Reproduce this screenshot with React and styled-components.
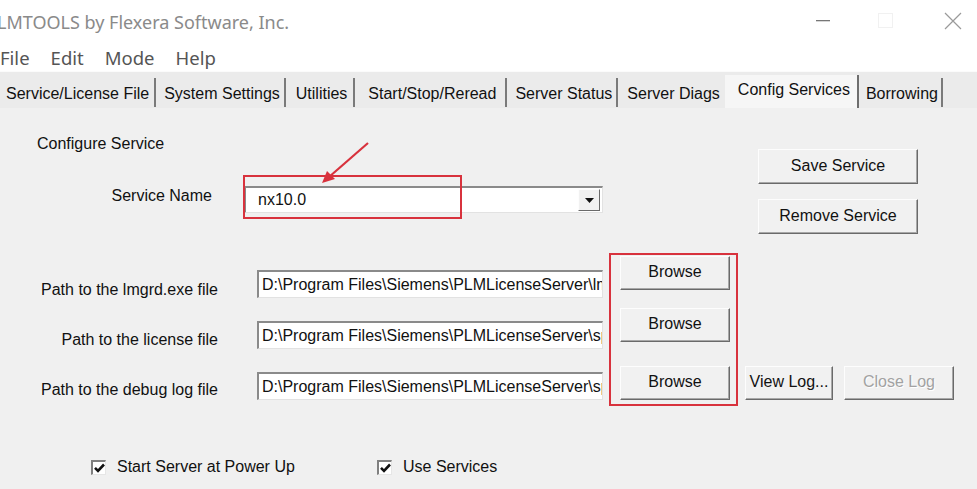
import React from 'react';
import styled, { createGlobalStyle } from 'styled-components';

const GlobalStyle = createGlobalStyle`
  html, body {
    margin: 0;
    padding: 0;
    background: #f0f0f0;
  }
  body {
    width: 977px;
    height: 489px;
    overflow: hidden;
    font-family: "Liberation Sans", Arial, sans-serif;
    color: #111;
  }
`;

const Window = styled.div`
  position: relative;
  width: 977px;
  height: 489px;
  overflow: hidden;
  background: #f0f0f0;
`;

const TitleBar = styled.div`
  height: 45px;
  display: flex;
  align-items: center;
  background: #fff;
`;
const TitleText = styled.div`
  margin-left: -3px;
  margin-top: -2px;
  font-family: "Noto Sans", "Open Sans", sans-serif;
  font-size: 18px;
  color: #8a8a8a;
  flex: 1;
  white-space: nowrap;
`;
const Controls = styled.div`
  display: flex;
  align-items: center;
  margin-top: -4px;
  svg {
    display: block;
  }
`;
const ControlBox = styled.div`
  width: ${(p) => p.$w}px;
  display: flex;
  justify-content: center;
`;

const MenuBar = styled.div`
  height: 26px;
  display: flex;
  align-items: center;
  gap: 21px;
  background: #fff;
  font-family: "Noto Sans", "Open Sans", sans-serif;
  font-size: 18.5px;
  color: #555;
  padding-bottom: 2px;
  box-sizing: border-box;
`;

const TabStrip = styled.div`
  height: 37px;
  display: flex;
  align-items: flex-end;
  background: #ebebeb;
  border-top: 1px solid #fbfbfb;
  box-sizing: border-box;
`;
const Tab = styled.div`
  display: flex;
  align-items: center;
  height: 26px;
  margin-bottom: 1px;
  padding: 3px ${(p) => 5 + (p.$extra || 0)}px 0 ${(p) => (p.$first ? 6 : 9) + (p.$extra || 0)}px;
  font-size: 16px;
  border-right: ${(p) => (p.$noSep ? 'none' : '2px solid #7a7a7a')};
  white-space: nowrap;
`;
const ActiveTab = styled.div`
  display: flex;
  align-items: center;
  align-self: stretch;
  padding: 0 7px 4px 13px;
  margin-top: 3px;
  font-size: 16px;
  background: #f6f6f6;
  border-right: 2px solid #6e6e6e;
  white-space: nowrap;
`;

const Body = styled.div`
  display: flex;
  flex-direction: column;
`;

const TopArea = styled.div`
  display: grid;
  grid-template-columns: 758px 160px;
  height: 148px;
`;
const LeftCol = styled.div`
  display: flex;
  flex-direction: column;
`;
const Heading = styled.div`
  margin: 26px 0 0 37px;
  line-height: 20px;
  font-size: 16px;
`;
const ServiceRow = styled.div`
  display: flex;
  align-items: flex-start;
  margin-top: 32px;
`;
const ServiceLabel = styled.div`
  width: 212px;
  text-align: right;
  line-height: 20px;
  padding-top: ${(p) => p.$offset}px;
  font-size: 16px;
  flex-shrink: 0;
`;
const ButtonStack = styled.div`
  display: flex;
  flex-direction: column;
  gap: 15px;
  padding-top: 41px;
`;

const Button = styled.div`
  box-sizing: border-box;
  width: ${(p) => p.$w}px;
  height: ${(p) => p.$h || 35}px;
  display: flex;
  align-items: center;
  justify-content: center;
  padding-bottom: 2px;
  font-size: 16px;
  background: #f1f1f1;
  border: 1px solid;
  border-color: #fdfdfd #6a6a6a #6a6a6a #fdfdfd;
  box-shadow: inset -1px -1px 0 #a8a8a8;
  color: ${(p) => (p.$disabled ? '#a2a2a2' : '#111')};
  text-shadow: ${(p) => (p.$disabled ? '1px 1px 0 #fff' : 'none')};
  white-space: nowrap;
  flex-shrink: 0;
`;

const Combo = styled.div`
  box-sizing: border-box;
  width: 359px;
  height: 27px;
  margin-left: 32px;
  display: flex;
  align-items: center;
  background: #fff;
  border-top: 2px solid #8a8a8a;
  border-left: 2px solid #8a8a8a;
  border-right: 1px solid #e2e2e2;
  border-bottom: 1px solid #e2e2e2;
`;
const ComboText = styled.div`
  flex: 1;
  padding-left: 12px;
  font-size: 16px;
`;
const DropButton = styled.div`
  box-sizing: border-box;
  width: 22px;
  height: 22px;
  margin-right: 2px;
  display: flex;
  align-items: center;
  justify-content: center;
  background: #f1f1f1;
  border: 1px solid;
  border-color: #fdfdfd #6a6a6a #6a6a6a #fdfdfd;
`;

const PathRow = styled.div`
  display: flex;
  align-items: flex-start;
  height: ${(p) => p.$h}px;
`;
const PathLabel = styled.div`
  width: 218px;
  flex-shrink: 0;
  text-align: right;
  font-size: 16px;
  line-height: 20px;
  padding-top: ${(p) => p.$offset}px;
`;
const PathInput = styled.div`
  box-sizing: border-box;
  width: 346px;
  height: 28px;
  margin: ${(p) => p.$offset}px 17px 0 39px;
  padding-left: 3px;
  display: flex;
  align-items: center;
  overflow: hidden;
  white-space: nowrap;
  font-size: 16px;
  background: #fff;
  border-top: 2px solid #8a8a8a;
  border-left: 2px solid #8a8a8a;
  border-right: 1px solid #e2e2e2;
  border-bottom: 1px solid #e2e2e2;
`;
const Gap = styled.div`
  width: ${(p) => p.$w}px;
  flex-shrink: 0;
`;

const CheckRow = styled.div`
  display: flex;
  align-items: center;
  margin-top: 58px;
  padding-left: 91px;
`;
const CheckItem = styled.div`
  display: flex;
  align-items: center;
  gap: 11px;
  width: ${(p) => p.$w}px;
  font-size: 16px;
`;
const CheckBox = styled.div`
  box-sizing: border-box;
  width: 15px;
  height: 15px;
  background: #fff;
  border-top: 2px solid #808080;
  border-left: 2px solid #808080;
  border-right: 1px solid #e6e6e6;
  border-bottom: 1px solid #e6e6e6;
  display: flex;
  align-items: center;
  justify-content: center;
  svg {
    display: block;
  }
`;

const Highlight = styled.div`
  position: absolute;
  left: ${(p) => p.$x}px;
  top: ${(p) => p.$y}px;
  width: ${(p) => p.$w}px;
  height: ${(p) => p.$h}px;
  box-sizing: border-box;
  border: 2px solid #d8323d;
  pointer-events: none;
`;
const ArrowSvg = styled.svg`
  position: absolute;
  left: 310px;
  top: 135px;
  pointer-events: none;
`;

function Check() {
  return (
    <CheckBox>
      <svg width="11" height="10" viewBox="0 0 11 10">
        <path d="M1 4.8 L4 7.8 L10 1.5" fill="none" stroke="#111" strokeWidth="2.6" />
      </svg>
    </CheckBox>
  );
}

const paths = [
  {
    label: 'Path to the lmgrd.exe file',
    value: 'D:\\Program Files\\Siemens\\PLMLicenseServer\\lmgrd.exe',
    h: 52,
    labelOffset: 24,
    inputOffset: 14,
  },
  {
    label: 'Path to the license file',
    value: 'D:\\Program Files\\Siemens\\PLMLicenseServer\\splm10.lic',
    h: 58,
    labelOffset: 22,
    inputOffset: 13,
  },
  {
    label: 'Path to the debug log file',
    value: 'D:\\Program Files\\Siemens\\PLMLicenseServer\\splm_ugslmd.log',
    h: 34,
    labelOffset: 14,
    inputOffset: 6,
  },
];

const tabs = [
  { name: 'Service/License File', extra: 0 },
  { name: 'System Settings', extra: -1 },
  { name: 'Utilities', extra: 1 },
  { name: 'Start/Stop/Reread', extra: 4 },
  { name: 'Server Status', extra: -1 },
  { name: 'Server Diags', extra: 0 },
];

export default function App() {
  return (
    <Window>
      <GlobalStyle />
      <TitleBar>
        <TitleText>LMTOOLS by Flexera Software, Inc.</TitleText>
        <Controls>
          <ControlBox $w={36}>
            <svg width="14" height="2">
              <rect width="14" height="1.3" fill="#777" />
            </svg>
          </ControlBox>
          <ControlBox $w={88}>
            <svg width="15" height="15">
              <rect x="0.5" y="0.5" width="14" height="14" fill="none" stroke="#f1f1f1" />
            </svg>
          </ControlBox>
          <ControlBox $w={48}>
            <svg width="18" height="18">
              <path d="M1 1 L17 17 M17 1 L1 17" stroke="#9a9a9a" strokeWidth="1.2" />
            </svg>
          </ControlBox>
        </Controls>
      </TitleBar>

      <MenuBar>
        <span>File</span>
        <span>Edit</span>
        <span>Mode</span>
        <span>Help</span>
      </MenuBar>

      <TabStrip>
        {tabs.map((t, i) => (
          <Tab
            key={t.name}
            $first={i === 0}
            $extra={t.extra}
            $noSep={i === tabs.length - 1}
          >
            {t.name}
          </Tab>
        ))}
        <ActiveTab>Config Services</ActiveTab>
        <Tab $extra={-2}>Borrowing</Tab>
      </TabStrip>

      <Body>
        <TopArea>
          <LeftCol>
            <Heading>Configure Service</Heading>
            <ServiceRow>
              <ServiceLabel $offset={0}>Service Name</ServiceLabel>
              <Combo>
                <ComboText>nx10.0</ComboText>
                <DropButton>
                  <svg width="9" height="5">
                    <path d="M0 0 L9 0 L4.5 5 Z" fill="#111" />
                  </svg>
                </DropButton>
              </Combo>
            </ServiceRow>
          </LeftCol>
          <ButtonStack>
            <Button $w={160}>Save Service</Button>
            <Button $w={160}>Remove Service</Button>
          </ButtonStack>
        </TopArea>

        {paths.map((p, i) => (
          <PathRow key={p.label} $h={p.h}>
            <PathLabel $offset={p.labelOffset}>{p.label}</PathLabel>
            <PathInput $offset={p.inputOffset}>{p.value}</PathInput>
            <Button $w={110} $h={34}>Browse</Button>
            {i === 2 && (
              <>
                <Gap $w={15} />
                <Button $w={88} $h={34}>View Log...</Button>
                <Gap $w={11} />
                <Button $w={110} $h={34} $disabled>
                  Close Log
                </Button>
              </>
            )}
          </PathRow>
        ))}

        <CheckRow>
          <CheckItem $w={286}>
            <Check />
            Start Server at Power Up
          </CheckItem>
          <CheckItem $w={200}>
            <Check />
            Use Services
          </CheckItem>
        </CheckRow>
      </Body>

      <Highlight $x={243} $y={175} $w={219} $h={44} />
      <Highlight $x={609} $y={253} $w={129} $h={153} />
      <ArrowSvg width="70" height="60" viewBox="0 0 70 60">
        <path d="M58 8 L19 42" stroke="#d8323d" strokeWidth="2.2" fill="none" />
        <path d="M12 48 L17 36 L25 44 Z" fill="#d8323d" />
      </ArrowSvg>
    </Window>
  );
}
